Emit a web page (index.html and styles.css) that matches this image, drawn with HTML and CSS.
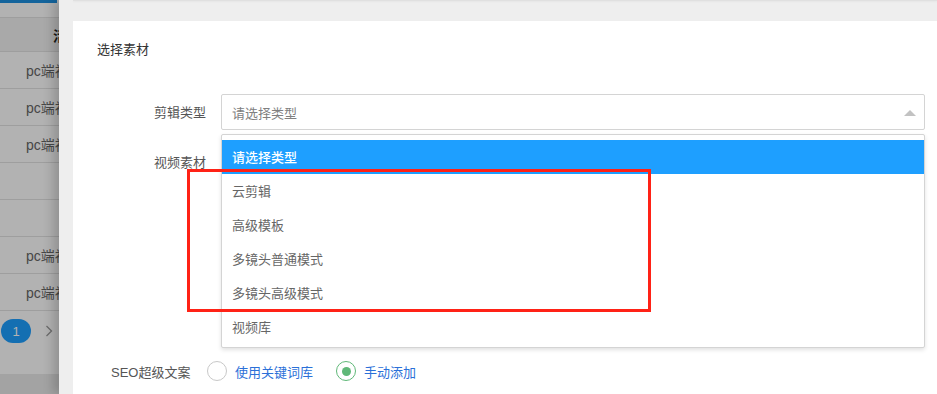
FILE: index.html
```html
<!DOCTYPE html>
<html lang="zh-CN">
<head>
<meta charset="utf-8">
<title>选择素材</title>
<link rel="stylesheet" href="styles.css">
</head>
<body>
<div class="page">
  <aside class="bg-list">
    <div class="bg-btn"></div>
    <div class="bg-head"><span>活动</span></div>
    <div class="bg-row"><span>pc端视频</span></div>
    <div class="bg-row"><span>pc端视频</span></div>
    <div class="bg-row"><span>pc端视频</span></div>
    <div class="bg-row"></div>
    <div class="bg-row"></div>
    <div class="bg-row"><span>pc端视频</span></div>
    <div class="bg-row"><span>pc端视频</span></div>
    <div class="bg-pager">
      <span class="pg-cur">1</span>
      <svg class="pg-next" width="8" height="12" viewBox="0 0 8 12"><path d="M1.5 1l5 5-5 5" fill="none" stroke="#9a9a9a" stroke-width="1.3"/></svg>
    </div>
    <div class="bg-foot"></div>
  </aside>

  <main class="drawer">
    <div class="prev-card"></div>
    <section class="card">
      <h2 class="card-title">选择素材</h2>

      <div class="form-row">
        <label class="form-label">剪辑类型</label>
        <div class="select">
          <div class="select-box">
            <span class="placeholder">请选择类型</span>
            <i class="edge"></i>
          </div>
          <dl class="options">
            <dd class="opt opt-this">请选择类型</dd>
            <dd class="opt">云剪辑</dd>
            <dd class="opt">高级模板</dd>
            <dd class="opt">多镜头普通模式</dd>
            <dd class="opt">多镜头高级模式</dd>
            <dd class="opt">视频库</dd>
          </dl>
        </div>
      </div>

      <div class="form-row form-row-tall">
        <label class="form-label">视频素材</label>
        <div class="material-area"></div>
      </div>

      <div class="seo-row">
        <span class="seo-label">SEO超级文案</span>
        <span class="radio"><i class="radio-icon"></i><span class="radio-text">使用关键词库</span></span>
        <span class="radio radio-on"><i class="radio-icon"></i><span class="radio-text">手动添加</span></span>
      </div>
    </section>
  </main>

  <div class="mark"></div>
</div>
</body>
</html>
```

FILE: styles.css
```css
html, body {
  margin: 0;
  padding: 0;
}
body {
  width: 937px;
  height: 394px;
  overflow: hidden;
  font-family: "Liberation Sans", "Noto Sans CJK SC", sans-serif;
  font-size: 13px;
  color: #333;
}
.page {
  position: relative;
  display: flex;
  width: 937px;
  height: 394px;
}

/* dimmed list behind the drawer */
.bg-list {
  position: relative;
  width: 59px;
  flex: none;
  overflow: hidden;
  background: #fff;
  display: flex;
  flex-direction: column;
}
.bg-list::after {
  content: "";
  position: absolute;
  inset: 0;
  background: rgba(0, 0, 0, 0.3);
}
.bg-btn {
  width: 57px;
  height: 3px;
  background: #1e90e0;
}
.bg-head {
  margin-top: 14px;
  height: 33px;
  border-top: 1px solid #e2e2e2;
  border-bottom: 1px solid #e2e2e2;
  background: #f2f2f2;
  display: flex;
  align-items: center;
  white-space: nowrap;
}
.bg-head span {
  padding-left: 53px;
  font-weight: bold;
  color: #222;
  font-size: 14px;
}
.bg-row {
  height: 36px;
  border-bottom: 1px solid #e2e2e2;
  display: flex;
  align-items: center;
  white-space: nowrap;
  color: #666;
  font-size: 14px;
}
.bg-row span {
  padding-left: 26px;
}
.bg-pager {
  height: 63px;
  display: flex;
  align-items: flex-start;
  gap: 14px;
  padding-left: 1px;
  padding-top: 8px;
  box-sizing: border-box;
}
.pg-cur {
  width: 30px;
  height: 24px;
  border-radius: 12px;
  background: #1e9fff;
  color: #fff;
  font-size: 13px;
  display: flex;
  align-items: center;
  justify-content: center;
}
.pg-next {
  margin-top: 6px;
}
.bg-foot {
  flex: 1;
  background: #eaeaea;
}

/* drawer */
.drawer {
  position: relative;
  z-index: 1;
  flex: 1;
  background: #eeeeee;
  box-shadow: -6px 0 10px rgba(0, 0, 0, 0.18);
  padding-left: 14px;
  display: flex;
  flex-direction: column;
}
.prev-card {
  height: 1px;
  background: #e0e0e0;
  box-shadow: 0 1px 2px rgba(0, 0, 0, 0.05);
  margin-bottom: 20px;
}
.card {
  flex: 1;
  background: #fff;
  padding: 0 12px 0 0;
}
.card-title {
  margin: 0;
  padding: 18px 0 0 24px;
  height: 20px;
  line-height: 20px;
  font-size: 13px;
  font-weight: normal;
  color: #333;
  font-family: "Noto Sans CJK SC", sans-serif;
}

.form-row {
  display: flex;
  margin-top: 35px;
}
.form-row-tall {
  margin-top: 14px;
}
.form-label {
  width: 133px;
  padding-right: 15px;
  height: 36px;
  line-height: 36px;
  text-align: right;
  color: #555;
  font-family: "Noto Sans CJK SC", sans-serif;
  flex: none;
}
.select {
  position: relative;
  flex: 1;
}
.select-box {
  height: 34px;
  border: 1px solid #d4d4d4;
  border-radius: 2px;
  display: flex;
  align-items: center;
  padding: 0 10px;
  position: relative;
}
.placeholder {
  color: #808080;
  font-family: "Noto Sans CJK SC", sans-serif;
}
.edge {
  position: absolute;
  right: 8px;
  top: 15px;
  width: 0;
  height: 0;
  border-left: 6px solid transparent;
  border-right: 6px solid transparent;
  border-bottom: 6px solid #c2c2c2;
}
.options {
  position: absolute;
  z-index: 5;
  left: 0;
  right: 0;
  top: 40px;
  margin: 0;
  padding: 5px 0 3px;
  background: #fff;
  border: 1px solid #d4d4d4;
  border-radius: 2px;
  box-shadow: 0 2px 4px rgba(0, 0, 0, 0.12);
}
.opt {
  margin: 0;
  height: 34px;
  line-height: 33px;
  padding: 0 10px;
  color: #666;
  font-family: "Noto Sans CJK SC", sans-serif;
}
.opt-this {
  background: #1e9fff;
  color: #fff;
  font-weight: 500;
}
.material-area {
  flex: 1;
  height: 195px;
}

.seo-row {
  display: flex;
  align-items: center;
  height: 36px;
  margin-top: 14px;
  padding-left: 38px;
  font-family: "Liberation Sans", "Noto Sans CJK SC", sans-serif;
}
.seo-label {
  width: 96px;
  flex: none;
  color: #555;
}
.radio {
  display: flex;
  align-items: center;
  margin-right: 23px;
}
.radio-icon {
  width: 18px;
  height: 18px;
  border: 1px solid #c8c8c8;
  border-radius: 50%;
  margin-right: 8px;
  position: relative;
}
.radio-on .radio-icon {
  border-color: #5fb878;
}
.radio-on .radio-icon::after {
  content: "";
  position: absolute;
  left: 4.5px;
  top: 4.5px;
  width: 9px;
  height: 9px;
  border-radius: 50%;
  background: #5fb878;
}
.radio-text {
  color: #2b70d8;
  font-family: "Noto Sans CJK SC", sans-serif;
}

/* annotation */
.mark {
  position: absolute;
  z-index: 10;
  left: 187px;
  top: 169px;
  width: 458px;
  height: 137px;
  border: 3px solid #ff2216;
}
```
